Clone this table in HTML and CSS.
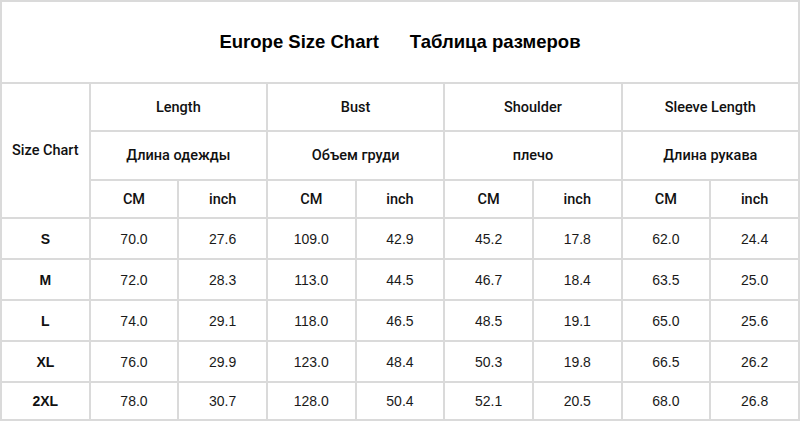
FILE: index.html
```html
<!DOCTYPE html>
<html>
<head>
<meta charset="utf-8">
<link rel="stylesheet" href="styles.css">
</head>
<body>
<table class="chart">
  <colgroup>
    <col class="c"><col class="c"><col class="c"><col class="c"><col class="c"><col class="c"><col class="c"><col class="c"><col class="c">
  </colgroup>
  <tr class="r-title">
    <td colspan="9" class="title"><span>Europe Size Chart</span><span class="ru">Таблица размеров</span></td>
  </tr>
  <tr class="r-h1">
    <td rowspan="3" class="hd">Size Chart</td>
    <td colspan="2" class="hd">Length</td>
    <td colspan="2" class="hd">Bust</td>
    <td colspan="2" class="hd">Shoulder</td>
    <td colspan="2" class="hd">Sleeve Length</td>
  </tr>
  <tr class="r-h2">
    <td colspan="2" class="hd">Длина одежды</td>
    <td colspan="2" class="hd">Объем груди</td>
    <td colspan="2" class="hd">плечо</td>
    <td colspan="2" class="hd">Длина рукава</td>
  </tr>
  <tr class="r-h3">
    <td class="hd">CM</td><td class="hd">inch</td>
    <td class="hd">CM</td><td class="hd">inch</td>
    <td class="hd">CM</td><td class="hd">inch</td>
    <td class="hd">CM</td><td class="hd">inch</td>
  </tr>
  <tr class="r-d">
    <td class="sz">S</td><td>70.0</td><td>27.6</td><td>109.0</td><td>42.9</td><td>45.2</td><td>17.8</td><td>62.0</td><td>24.4</td>
  </tr>
  <tr class="r-d">
    <td class="sz">M</td><td>72.0</td><td>28.3</td><td>113.0</td><td>44.5</td><td>46.7</td><td>18.4</td><td>63.5</td><td>25.0</td>
  </tr>
  <tr class="r-d">
    <td class="sz">L</td><td>74.0</td><td>29.1</td><td>118.0</td><td>46.5</td><td>48.5</td><td>19.1</td><td>65.0</td><td>25.6</td>
  </tr>
  <tr class="r-d">
    <td class="sz">XL</td><td>76.0</td><td>29.9</td><td>123.0</td><td>48.4</td><td>50.3</td><td>19.8</td><td>66.5</td><td>26.2</td>
  </tr>
  <tr class="r-d r-last">
    <td class="sz">2XL</td><td>78.0</td><td>30.7</td><td>128.0</td><td>50.4</td><td>52.1</td><td>20.5</td><td>68.0</td><td>26.8</td>
  </tr>
</table>
</body>
</html>
```

FILE: styles.css
```css
html, body {
  margin: 0;
  padding: 0;
  background: #fff;
}
.chart {
  width: 800px;
  border-collapse: collapse;
  table-layout: fixed;
  font-family: "Liberation Sans", Arial, sans-serif;
  font-size: 14px;
  color: #1a1a1a;
}
.chart td {
  border: 2px solid #dadada;
  text-align: center;
  vertical-align: middle;
  padding: 0;
}
.r-title { height: 82px; }
.r-h1 { height: 48px; }
.r-h2 { height: 49px; }
.r-h3 { height: 38px; }
.r-d { height: 41px; }
.r-last { height: 38px; }
.title {
  font-weight: bold;
  font-size: 18.5px;
  color: #000;
}
.title .ru { margin-left: 31px; }
.hd {
  font-family: Roboto, "Liberation Sans", sans-serif;
  font-weight: 500;
  font-size: 14.5px;
  color: #111;
}
.sz {
  font-weight: bold;
  color: #111;
}
```
